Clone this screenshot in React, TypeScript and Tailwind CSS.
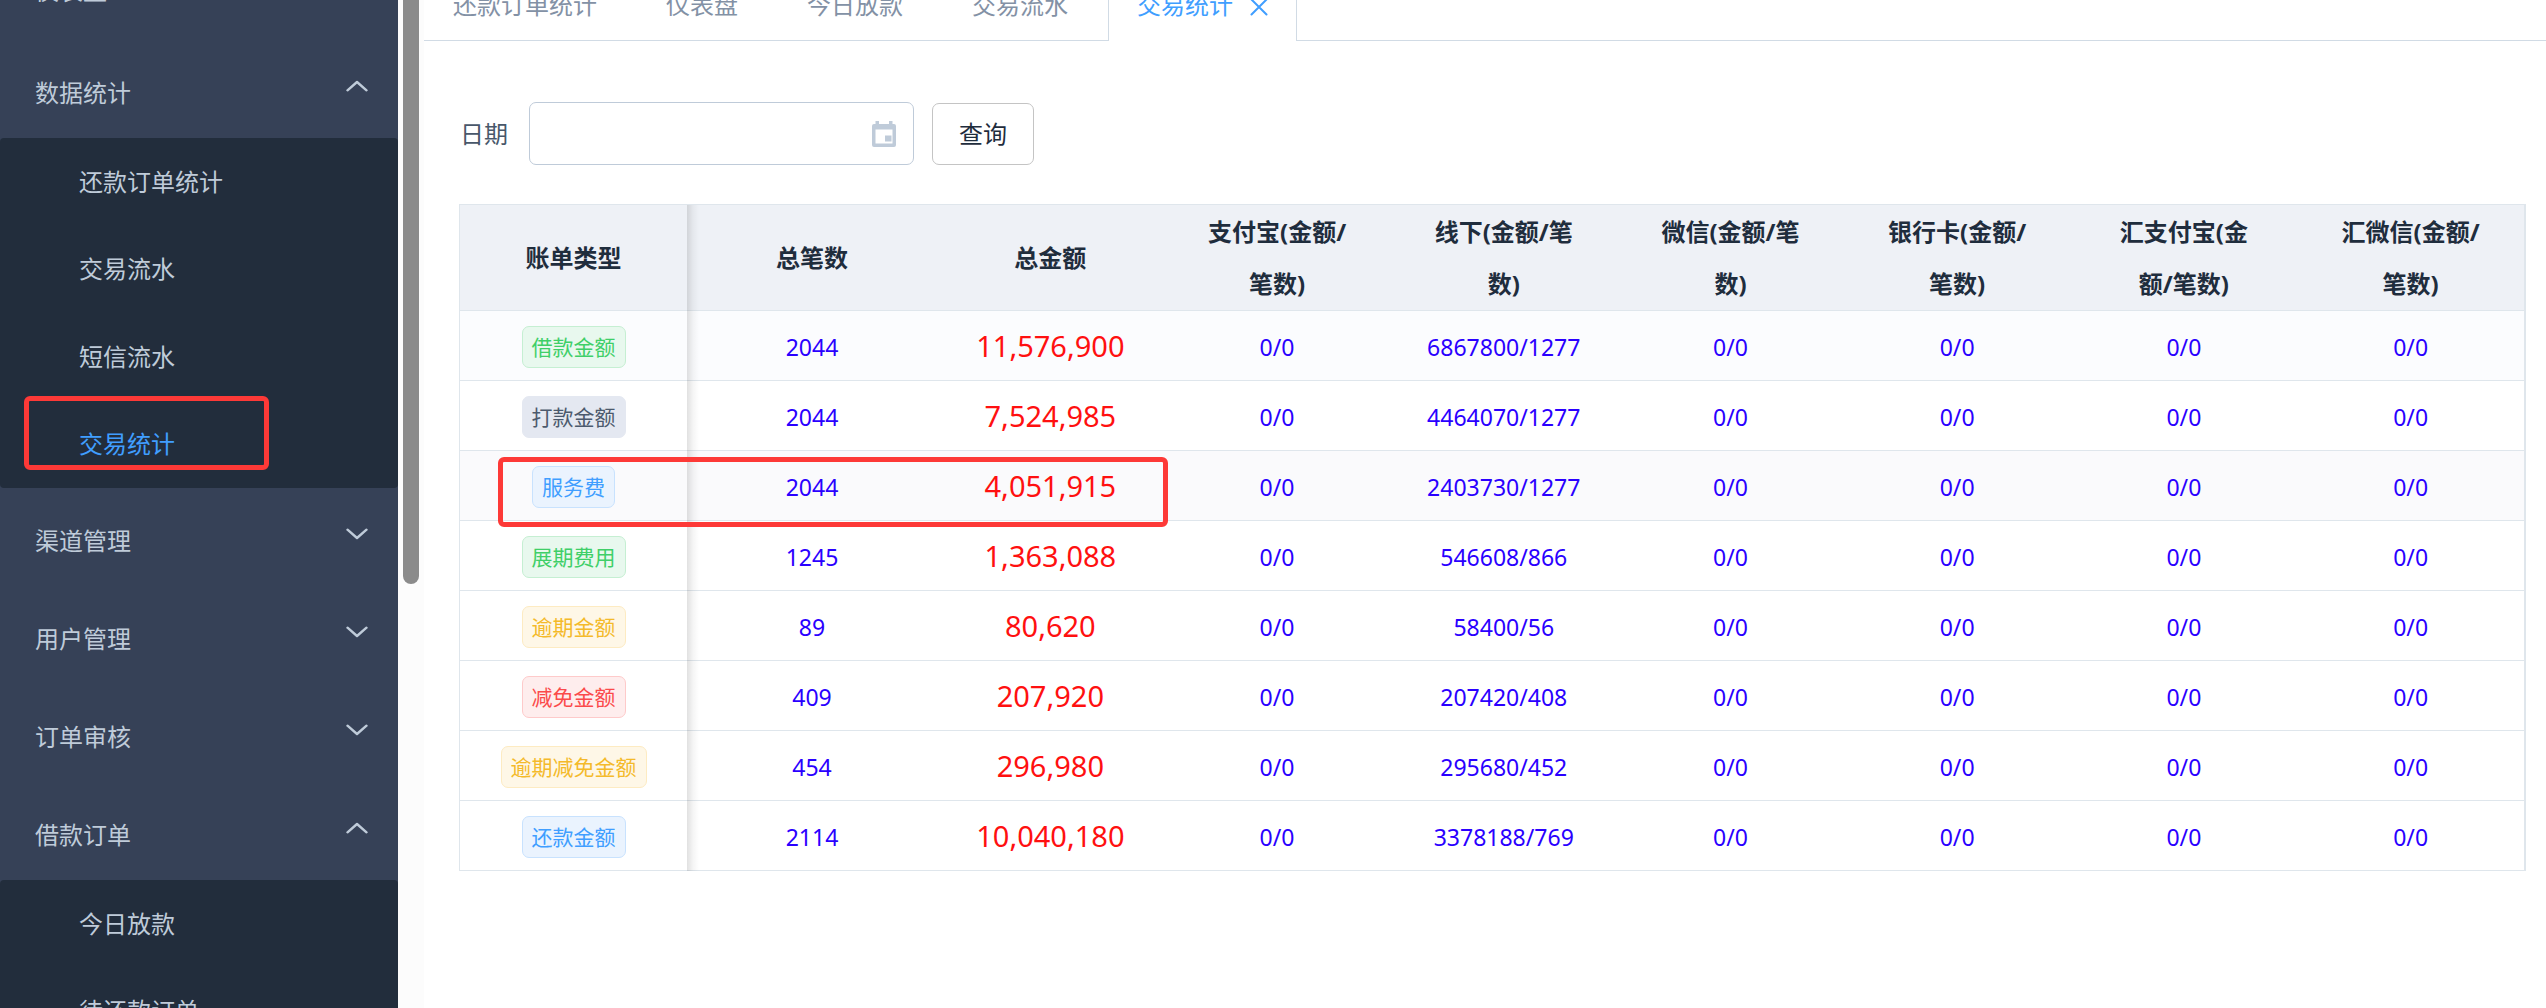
import React from "react";

type Tone = "green" | "gray" | "blue" | "yellow" | "red";

const toneClass: Record<Tone, string> = {
  green: "bg-[#e8f8ee] border-[#c5efd2] text-[#3fcf68]",
  gray: "bg-[#e4e8f1] border-[#e4e8f1] text-[#4c5a6d]",
  blue: "bg-[#eaf3fe] border-[#c8e2fe] text-[#409eff]",
  yellow: "bg-[#fef7e7] border-[#fdebc2] text-[#f4ba2a]",
  red: "bg-[#feeded] border-[#fecaca] text-[#fb4a4a]",
};

const tabs = ["还款订单统计", "仪表盘", "今日放款", "交易流水"];

const columns = [
  "账单类型",
  "总笔数",
  "总金额",
  "支付宝(金额/笔数)",
  "线下(金额/笔数)",
  "微信(金额/笔数)",
  "银行卡(金额/笔数)",
  "汇支付宝(金额/笔数)",
  "汇微信(金额/笔数)",
];

interface Row {
  name: string;
  tone: Tone;
  count: string;
  total: string;
  offline: string;
  bg: string;
}

const rows: Row[] = [
  { name: "借款金额", tone: "green", count: "2044", total: "11,576,900", offline: "6867800/1277", bg: "bg-[#fbfcfe]" },
  { name: "打款金额", tone: "gray", count: "2044", total: "7,524,985", offline: "4464070/1277", bg: "bg-white" },
  { name: "服务费", tone: "blue", count: "2044", total: "4,051,915", offline: "2403730/1277", bg: "bg-[#fafafc]" },
  { name: "展期费用", tone: "green", count: "1245", total: "1,363,088", offline: "546608/866", bg: "bg-white" },
  { name: "逾期金额", tone: "yellow", count: "89", total: "80,620", offline: "58400/56", bg: "bg-white" },
  { name: "减免金额", tone: "red", count: "409", total: "207,920", offline: "207420/408", bg: "bg-white" },
  { name: "逾期减免金额", tone: "yellow", count: "454", total: "296,980", offline: "295680/452", bg: "bg-white" },
  { name: "还款金额", tone: "blue", count: "2114", total: "10,040,180", offline: "3378188/769", bg: "bg-white" },
];

function Chevron({ open }: { open: boolean }) {
  return (
    <svg
      className="mb-1.5 shrink-0"
      width="22"
      height="12"
      viewBox="0 0 22 12"
      fill="none"
      stroke="currentColor"
      strokeWidth="2.4"
      strokeLinecap="round"
      strokeLinejoin="round"
      aria-hidden="true"
    >
      <path d={open ? "M1.5 10.3 L11 2 L20.5 10.3" : "M1.5 1.7 L11 10 L20.5 1.7"} />
    </svg>
  );
}

function MenuHeading({ label, open = false }: { label: string; open?: boolean }) {
  return (
    <button
      type="button"
      aria-expanded={open}
      className="flex h-[98px] w-full shrink-0 items-center justify-between pr-[30px] pl-[35px] text-left"
    >
      <span className="pt-2">{label}</span>
      <Chevron open={open} />
    </button>
  );
}

function SubItem({ label, active = false }: { label: string; active?: boolean }) {
  return (
    <a
      href="#"
      className={
        active
          ? "relative flex flex-1 items-center pl-[79px] text-[#409eff]"
          : "relative flex flex-1 items-center pl-[79px]"
      }
    >
      {label}
      {active && (
        <span className="absolute top-[-5px] left-6 h-[74px] w-[245px] rounded-md border-5 border-[#fd3937]" />
      )}
    </a>
  );
}

function Sidebar() {
  return (
    <nav className="flex w-[398px] shrink-0 flex-col overflow-hidden bg-[#364157] text-[24px] leading-9 text-[#bfcbd9]">
      <div className="flex h-10 shrink-0 items-end">
        <a href="#" className="flex h-[98px] shrink-0 items-center pl-[35px]">
          仪表盘
        </a>
      </div>
      <MenuHeading label="数据统计" open />
      <div className="flex h-[350px] shrink-0 flex-col rounded-sm bg-[#222d3c]">
        <SubItem label="还款订单统计" />
        <SubItem label="交易流水" />
        <SubItem label="短信流水" />
        <SubItem label="交易统计" active />
      </div>
      <MenuHeading label="渠道管理" />
      <MenuHeading label="用户管理" />
      <MenuHeading label="订单审核" />
      <MenuHeading label="借款订单" open />
      <div className="flex h-[175px] shrink-0 flex-col rounded-sm bg-[#222d3c]">
        <SubItem label="今日放款" />
        <SubItem label="待还款订单" />
      </div>
    </nav>
  );
}

function TabBar() {
  return (
    <div className="flex h-[41px] items-end overflow-hidden text-[24px] text-[#8391a5]">
      <div className="flex h-[72px] shrink-0 gap-[11px] border-b border-[#d1dbe5] pr-[11px]">
        {tabs.map((tab) => (
          <button type="button" key={tab} className="border-x border-transparent px-7">
            {tab}
          </button>
        ))}
      </div>
      <div className="flex h-[72px] shrink-0 items-center gap-[17px] border-x border-[#d1dbe5] px-7 text-[#409eff]">
        <button type="button">交易统计</button>
        <button type="button" aria-label="关闭" className="pt-1">
          <svg width="18" height="18" viewBox="0 0 18 18" stroke="currentColor" strokeWidth="2" strokeLinecap="round">
            <path d="M1.500 1.500 L16.500 16.500 M16.500 1.500 L1.500 16.500" />
          </svg>
        </button>
      </div>
      <div className="h-[72px] flex-1 border-b border-[#d1dbe5]" />
    </div>
  );
}

function FilterBar() {
  return (
    <form className="flex items-center text-[24px]">
      <label htmlFor="date" className="pl-px text-[#48576a]">
        日期
      </label>
      <div className="relative ml-[21px]">
        <input
          id="date"
          type="text"
          className="block h-[63px] w-[385px] rounded-[7px] border border-[#bfcbd9] bg-white pr-14 pl-4 text-[#1f2d3d]"
        />
        <svg
          className="pointer-events-none absolute top-[19px] right-[18px] text-[#bfcbd9]"
          width="24"
          height="26"
          viewBox="0 0 24 26"
          fill="currentColor"
          aria-hidden="true"
        >
          <path
            fillRule="evenodd"
            d="M3.500 0 H7 V3 H17 V0 H20.500 V3 H22 Q24 3 24 5 V24 Q24 26 22 26 H2 Q0 26 0 24 V5 Q0 3 2 3 H3.500 Z M3.500 8.500 V22.500 H20.500 V8.500 Z"
          />
          <rect x="13" y="14.500" width="6.500" height="6" />
        </svg>
      </div>
      <button
        type="button"
        className="ml-[18px] h-[62px] rounded-[7px] border border-[#c4c4c4] bg-white px-[26px] text-[#1f2d3d]"
      >
        查询
      </button>
    </form>
  );
}

function StatsTable() {
  return (
    <div className="relative mt-[39px] border-t border-r-2 border-l border-[#dfe6ec]">
      <table className="w-full table-fixed border-separate border-spacing-0 text-center text-[23px] leading-9 text-[#2a00ff]">
        <colgroup>
          <col className="w-[227px]" />
          <col className="w-[250px]" />
          {columns.slice(2).map((c) => (
            <col key={c} />
          ))}
        </colgroup>
        <thead>
          <tr>
            {columns.map((c) => (
              <th
                key={c}
                scope="col"
                className="h-[106px] border-b border-[#dfe6ec] bg-[#eef1f6] px-9 text-[24px] leading-[52px] font-bold text-[#1f2d3d]"
              >
                {c}
              </th>
            ))}
          </tr>
        </thead>
        <tbody>
          {rows.map((row) => (
            <tr key={row.name} className={row.bg}>
              <td className="relative h-[70px] border-b border-[#dfe6ec] pt-0.5">
                <span
                  className={`inline-block rounded-[7px] border px-[9px] align-middle text-[21px] leading-10 whitespace-nowrap ${toneClass[row.tone]}`}
                >
                  {row.name}
                </span>
                {row.name === "服务费" && (
                  <span className="pointer-events-none absolute top-1.5 left-[38px] z-10 h-[70px] w-[670px] rounded-md border-5 border-[#fd3937]" />
                )}
              </td>
              <td className="border-b border-[#dfe6ec] pt-0.5">{row.count}</td>
              <td className="border-b border-[#dfe6ec] text-[29px] text-[#ff1010]">{row.total}</td>
              <td className="border-b border-[#dfe6ec] pt-0.5">0/0</td>
              <td className="border-b border-[#dfe6ec] pt-0.5">{row.offline}</td>
              <td className="border-b border-[#dfe6ec] pt-0.5">0/0</td>
              <td className="border-b border-[#dfe6ec] pt-0.5">0/0</td>
              <td className="border-b border-[#dfe6ec] pt-0.5">0/0</td>
              <td className="border-b border-[#dfe6ec] pt-0.5">0/0</td>
            </tr>
          ))}
        </tbody>
      </table>
      <div className="pointer-events-none absolute inset-y-0 left-[227px] w-3 bg-linear-to-r from-black/12 via-black/4 to-transparent" />
    </div>
  );
}

export default function App() {
  return (
    <div className="flex h-screen overflow-hidden bg-white font-['Noto_Sans','Noto_Sans_CJK_SC',sans-serif]">
      <Sidebar />
      <div className="w-[26px] shrink-0 bg-[#fcfcfc] pl-[5px]">
        <div className="h-[584px] w-4 rounded-b-full bg-[#8b8b8b]" />
      </div>
      <main className="min-w-0 flex-1">
        <TabBar />
        <div className="pt-[61px] pr-5 pl-[35px]">
          <FilterBar />
          <StatsTable />
        </div>
      </main>
    </div>
  );
}
